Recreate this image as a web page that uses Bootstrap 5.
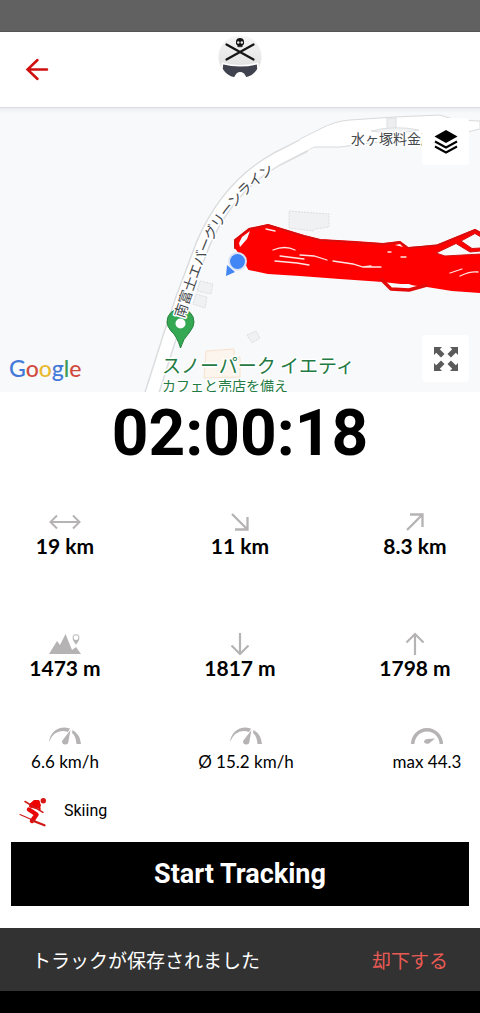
<!DOCTYPE html>
<html lang="ja">
<head>
<meta charset="utf-8">
<meta name="viewport" content="width=device-width, initial-scale=1">
<title>Ski Tracks</title>
<link href="https://cdn.jsdelivr.net/npm/bootstrap@5.3.0/dist/css/bootstrap.min.css" rel="stylesheet">
<style>
  body { font-family: Roboto, "Noto Sans CJK JP", sans-serif; color: #000; background: #fff; }
  .status-strip { height: 32px; background: #616161; border-bottom: 1px solid #555; }
  .app-header { height: 76px; border-bottom: 1px solid #d9dce0; background: #fff; display: grid; grid-template-columns: 1fr auto 1fr; }
  .back-btn { width: 48px; height: 48px; margin: 13px 0 0 13px; }
  .app-logo { margin-top: 3px; }
  .track-map { height: 284px; background: #f8f9fb; overflow: hidden; }
  .track-map > svg { width: 100%; height: 100%; display: block; }
  .map-tools { top: 10px; right: 11px; bottom: 10px; }
  .map-tool { width: 47px; height: 47px; background: #fff; border-radius: 4px; }
  .map-brand { left: 9px; bottom: 10px; font: 500 23px/28px Lato, sans-serif; }
  .map-brand .gb { color: #4279d8; } .map-brand .gr { color: #d04a3e; }
  .map-brand .gy { color: #e8b92e; } .map-brand .gg { color: #3b9a57; }
  .road-edge { fill: none; stroke: #dcdddf; stroke-width: 15; }
  .road-fill { fill: none; stroke: #fff; stroke-width: 12; }
  .building { fill: #f0f1f3; stroke: #dcdee0; stroke-dasharray: 2 1; }
  .map-label { font-family: "Noto Sans CJK JP", sans-serif; paint-order: stroke; stroke: #fff; stroke-width: 3px; stroke-linejoin: round; }
  .timer { font-size: 64px; line-height: 84px; }
  .stats { display: grid; grid-template-columns: 130px 1fr 130px; text-align: center; font-family: Lato, sans-serif; }
  .stats dt { height: 24px; display: flex; align-items: center; justify-content: center; color: #b5b3b3; }
  .stats dd { margin: 0; font-size: 21px; line-height: 24px; font-weight: 700; }
  .stats-distance { margin: 34px 0 74px; }
  .stats-height { margin-bottom: 44px; }
  .stats-speed { grid-template-columns: 130px 1fr 118px; margin-bottom: 17px; }
  .stats-speed dd { font-size: 17px; line-height: 28px; font-weight: 400; }
  .stats-speed > :last-child { padding-left: 12px; }
  .activity { height: 36px; padding-left: 18px; gap: 14px; font-size: 16px; margin-bottom: 13px; }
  .start-btn { height: 64px; font-size: 27px; background: #000; color: #fff; }
  .start-wrap { padding: 0 11px 22px; }
  .snack { height: 63px; background: #323232; color: #fff; padding: 0 32px; font: 19px/28px "Noto Sans CJK JP", sans-serif; }
  .snack button { color: #ea5a55; }
  .nav-strip { height: 22px; background: #000; }
</style>
</head>
<body class="d-flex flex-column min-vh-100">
<div class="status-strip"></div>

<header class="app-header">
  <button type="button" class="back-btn btn p-0 border-0" aria-label="Back">
    <svg width="24" height="24" viewBox="0 0 24 24" fill="none" stroke="#d01010" stroke-width="2.5" stroke-linecap="round"><path d="M22 12.500H2.500M12.500 3L2.500 12.500L12.500 22"/></svg>
  </button>
  <svg class="app-logo" width="46" height="46" viewBox="0 0 46 46" role="img" aria-label="Ski goggles logo">
    <defs><linearGradient id="helmet" x2="0" y2="1"><stop offset="0" stop-color="#f6f6f6"/><stop offset="1" stop-color="#e2e2e2"/></linearGradient></defs>
    <path d="M4 32A21.500 21.500 0 1 1 42 32Z" fill="url(#helmet)"/>
    <path d="M9.500 9.500L36.500 24.500M36.500 9.500L9.500 24.500" stroke="#151515" stroke-width="2.300" stroke-linecap="round"/>
    <path d="M19 7a4 4 0 0 1 8 0v2l-1.500 1.500V12h-5v-1.500L19 9Z" fill="#151515"/>
    <circle cx="21.300" cy="7.500" r="1.200" fill="#eee"/><circle cx="24.800" cy="7.500" r="1.200" fill="#eee"/><path d="M22 11v2M24 11v2" stroke="#888" stroke-width=".6"/>
    <path d="M5.500 28.500Q23 33 40.500 28.500L41 34Q37 41 29 43L26.500 39Q23 36.500 20 39L17.500 43Q9 41 5 34Z" fill="#41424f" stroke="#fff" stroke-width="1.500"/>
  </svg>
</header>

<section class="track-map position-relative" aria-label="Map">
  <svg viewBox="0 108 480 284" preserveAspectRatio="xMidYMid slice">
    <defs>
      <linearGradient id="shade" x2="0" y2="1"><stop offset="0" stop-color="#e9ebee"/><stop offset="1" stop-color="#f8f9fb"/></linearGradient>
      <path id="roadLabel" d="M178 317Q192 274 206 240Q230 193 280 160"/>
    </defs>
    <rect y="108" width="480" height="5" fill="url(#shade)"/>
    <path class="road-edge" d="M149 402L170 336L182 300L203 244Q228 186 277 159L305 145"/>
    <path d="M300 139L320 129Q335 121 350 120L395 117L440 115L456 120L480 121V129L455 135L410 139L370 143L340 147L315 147L298 153" fill="#fff" stroke="#d8dadc"/>
    <path class="road-fill" d="M149 402L170 336L182 300L203 244Q228 186 277 159L310 142"/>
    <path d="M387 118h9v14h-9z" fill="#eceef0" stroke="#dcdee0"/>
    <path d="M371 131Q395 125 419 130Q396 135 371 131Z" fill="#f2f3f5" stroke="#dcdee0"/>
    <path class="building" d="M289 211L329 214V227L315 229L313 231L289 228Z"/>
    <path class="building" d="M200 281l13 3-2 10-14-3zM196 294l11 3-2 11-12-4zM247 335l9-4 4 7-8 5z"/>
    <path d="M206 351l28-2v8h6v20l-36 1z" fill="#fcf5ee" stroke="#f7e2cd"/>

    <g stroke="#f00" stroke-linejoin="round">
      <path d="M235 240L249 229L268 225L304 236L320 240L355 242L383 244L400 242L408 248L436 246L475 230L481 233V292L452 290L427 286L383 281L340 278L300 275L268 273L249 269L243 257L235 247Z" fill="#f00" stroke-width="2"/>
      <path d="M381 279L391 289L409 290L427 285" fill="none" stroke="#e30a0a" stroke-width="3.500"/>
      <path d="M235 249V240L249 229L268 225L304 236L320 240L383 244L400 242L408 248L438 245L475 230L481 233" fill="none" stroke="#cf1111" stroke-width="1.500"/>
    </g>
    <path d="M239 243L242 237L250 231L247 239L240 247ZM395 245L400 244L403 247ZM390 284H409L414 286L392 287Z" fill="#f8f9fb"/>
    <path d="M461 241L475 233.500L481 237V248L472 248.500ZM436 253L456 243.500L470 252L481 251V254L445 256Z" fill="#f8f9fb" stroke="#d31212"/>
    <g fill="none" stroke="#ffe5e2" stroke-width="1.300" stroke-linecap="round">
      <path d="M266 229l9 2M273 250q12-5 22 0M280 256l24 3M275 261l22 2 12 2M300 255l14 1 13 4M333 261l20 3 10 3 8-1M363 267l18 0M450 273l12-4M460 276q10-5 18-4M401 257h5M388 252h3"/>
    </g>

    <path d="M226 276L227 265L235 272Z" fill="#4285f4"/>
    <circle cx="237.500" cy="261.500" r="9.500" fill="#dce5f5"/><circle cx="237.500" cy="261.500" r="7.500" fill="#4285f4"/>
    <path d="M180.500 348Q177 336 171 331Q167 326 167 322A13.500 13.500 0 0 1 194 322Q194 327 189 333Q183 339 180.500 348Z" fill="#34a853" stroke="#25823e"/>
    <circle cx="180.500" cy="323.500" r="5" fill="#fff"/>
    <text class="map-label" font-size="14" fill="#45484c" dominant-baseline="central"><textPath href="#roadLabel">南富士エバーグリーンライン</textPath></text>
    <text class="map-label" x="351" y="144" font-size="14" fill="#45484c">水ヶ塚料金所</text>
    <g class="map-label" fill="#237a43">
      <text x="162" y="373" font-size="19">スノーパーク イエティ</text>
      <text x="162" y="391" font-size="14">カフェと売店を備え</text>
    </g>
  </svg>
  <div class="map-brand position-absolute"><span class="gb">G</span><span class="gr">o</span><span class="gy">o</span><span class="gb">g</span><span class="gg">l</span><span class="gr">e</span></div>
  <div class="map-tools position-absolute d-flex flex-column justify-content-between">
    <button type="button" class="map-tool btn border-0 p-0 d-flex align-items-center justify-content-center" aria-label="Map layers">
      <svg width="24" height="24" viewBox="0 0 24 24"><path d="M12 0L23.500 6.500L12 13L.5 6.500Z"/><path d="M1 11.500L12 17.500L23 11.500M1 16.500L12 22.500L23 16.500" fill="none" stroke="#000" stroke-width="2"/></svg>
    </button>
    <button type="button" class="map-tool btn border-0 p-0 d-flex align-items-center justify-content-center" aria-label="Full screen">
      <svg width="26" height="26" viewBox="0 0 26 26" fill="#5b5b5b"><defs><path id="corner" d="M1 1H9L6.800 3.200L11.500 8L8 11.500L3.200 6.800L1 9Z"/></defs><use href="#corner"/><use href="#corner" transform="rotate(90 13 13)"/><use href="#corner" transform="rotate(180 13 13)"/><use href="#corner" transform="rotate(270 13 13)"/></svg>
    </button>
  </div>
</section>

<main class="flex-grow-1">
  <div class="timer fw-bold text-center">02:00:18</div>

  <dl class="stats stats-distance">
    <div><dt><svg width="32" height="16" viewBox="0 0 32 16" fill="none" stroke="currentColor" stroke-width="2"><path d="M1.500 8H30.500M8 1.500L1.500 8L8 14.500M24 1.500L30.500 8L24 14.500"/></svg></dt><dd>19 km</dd></div>
    <div><dt><svg width="18" height="18" viewBox="0 0 18 18" fill="none" stroke="currentColor" stroke-width="2.300"><path d="M1 1L16 16M16.500 4V16.500H4"/></svg></dt><dd>11 km</dd></div>
    <div><dt><svg width="18" height="18" viewBox="0 0 18 18" fill="none" stroke="currentColor" stroke-width="2.300"><path d="M1 17L16 2M4 1.500H16.500V14"/></svg></dt><dd>8.3 km</dd></div>
  </dl>

  <dl class="stats stats-height">
    <div><dt><svg width="32" height="22" viewBox="0 0 32 22" fill="currentColor"><path d="M0 21L8 8L11 12L16.500 1L23 17L27 14L32 21Z"/><path d="M27 12Q23 7 23.500 4.500A3.500 3.500 0 0 1 30.500 4.500Q31 7 27 12Z" stroke="#fff" stroke-width=".5"/><circle cx="27" cy="4.700" r="2.400" fill="#fff"/></svg></dt><dd>1473 m</dd></div>
    <div><dt><svg width="20" height="24" viewBox="0 0 20 24" fill="none" stroke="currentColor" stroke-width="2.200"><path d="M10 1V22M1.500 13.500L10 22L18.500 13.500"/></svg></dt><dd>1817 m</dd></div>
    <div><dt><svg width="20" height="24" viewBox="0 0 20 24" fill="none" stroke="currentColor" stroke-width="2.200"><path d="M10 23V2M1.500 10.500L10 2L18.500 10.500"/></svg></dt><dd>1798 m</dd></div>
  </dl>

  <dl class="stats stats-speed">
    <div><dt><svg width="32" height="18" viewBox="0 0 32 18" fill="currentColor"><defs><g id="gauge"><path d="M0 15Q2 1 16 .5L21 1.500L19 5Q6 1 0 15Z"/><path d="M23.500 3Q31 7 32 17H27.500Q27 9 23 6Z"/><path d="M21.500 3L13 14Q13 18 17 17.500Q19.500 17 19.500 14Z"/></g></defs><use href="#gauge"/></svg></dt><dd>6.6 km/h</dd></div>
    <div><dt><svg width="32" height="18" viewBox="0 0 32 18" fill="currentColor"><use href="#gauge"/></svg></dt><dd>Ø 15.2 km/h</dd></div>
    <div><dt><svg width="32" height="18" viewBox="0 0 32 18" fill="currentColor"><path d="M0 17A16 16 0 0 1 32 17H28.500A12.500 12.500 0 0 0 3.500 17Z"/><path d="M24 11.500L16 12Q13 12.500 13 15Q14 17.500 18 16.500Z"/></svg></dt><dd>max 44.3</dd></div>
  </dl>

  <div class="activity d-flex align-items-center">
    <svg width="32" height="32" viewBox="0 0 32 32" fill="none" stroke="#e80808" stroke-linecap="round" stroke-linejoin="round" aria-hidden="true">
      <circle cx="25.300" cy="5.700" r="2.700" stroke="none" fill="#d81414"/>
      <path d="M12 9L16 5.500L21 5.500L22.500 11L18 13.500L12 12Z" fill="#f00000" stroke-width="1"/>
      <path d="M11 14.500L18.500 19.500L14 26" stroke-width="4.500"/>
      <path d="M20.500 9L21.500 14" stroke-width="2.500"/>
      <path d="M7 6.500L25 17.300" stroke="#d01818" stroke-width="1.500"/>
      <path d="M2 19.500L18 26.500" stroke="#d01818" stroke-width="1.200"/><path d="M13 25L26.500 30.300" stroke="#d01818" stroke-width="2.200"/>
    </svg>
    <span>Skiing</span>
  </div>

  <div class="start-wrap"><button type="button" class="start-btn btn w-100 rounded-0 border-0 p-0 fw-bold">Start Tracking</button></div>
</main>

<footer>
  <div class="snack d-flex align-items-center justify-content-between" role="status">
    <span>トラックが保存されました</span>
    <button type="button" class="bg-transparent border-0 p-0">却下する</button>
  </div>
  <div class="nav-strip"></div>
</footer>
<script src="https://cdn.jsdelivr.net/npm/bootstrap@5.3.0/dist/js/bootstrap.bundle.min.js"></script>
</body>
</html>
